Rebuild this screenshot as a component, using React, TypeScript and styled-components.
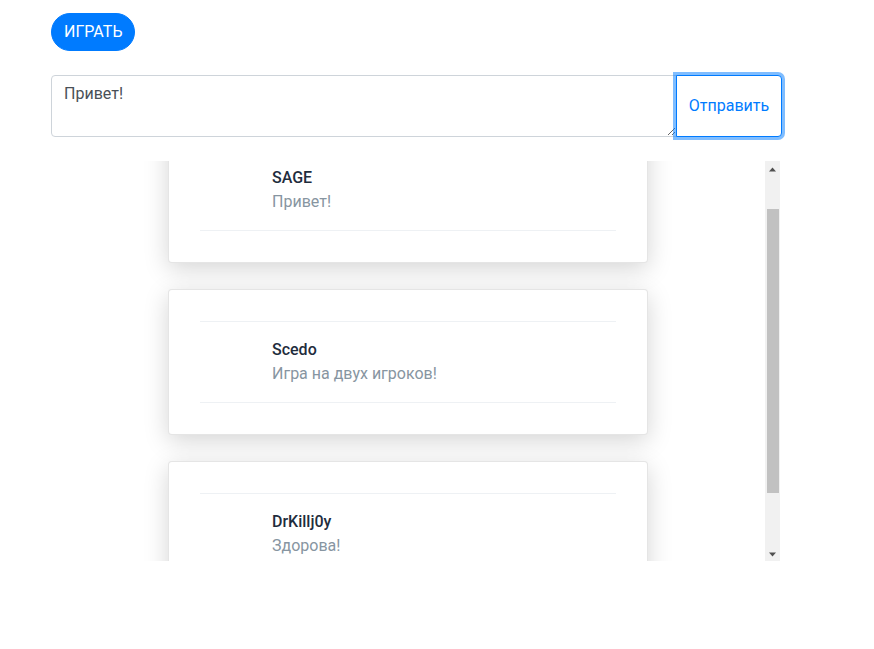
import React, { useEffect, useRef } from 'react';
import styled, { createGlobalStyle } from 'styled-components';

const GlobalStyle = createGlobalStyle`
  body {
    margin: 0;
    background: #fff;
    font-family: Roboto, "Liberation Sans", Arial, sans-serif;
    font-size: 16px;
    line-height: 1.5;
  }
  * { box-sizing: border-box; }
`;

const messages = [
  { author: 'SAGE', text: 'Привет!' },
  { author: 'Scedo', text: 'Игра на двух игроков!' },
  { author: 'DrKillj0y', text: 'Здорова!' },
];

const Arrow: React.FC<{ down?: boolean }> = ({ down }) => (
  <svg width="15" height="15" viewBox="0 0 15 15">
    <path d={down ? 'M4 6.5h7L7.5 10.5z' : 'M4 10.5h7L7.5 6.5z'} fill="#505050" />
  </svg>
);

const App: React.FC = () => {
  const listRef = useRef<HTMLDivElement>(null);

  useEffect(() => {
    if (listRef.current) listRef.current.scrollTop = 46;
  }, []);

  return (
    <>
      <GlobalStyle />
      <Page>
        <PlayButton>ИГРАТЬ</PlayButton>
        <InputGroup>
          <MessageInput defaultValue="Привет!" />
          <SendButton>Отправить</SendButton>
        </InputGroup>
        <ChatFrame>
          <ChatList ref={listRef}>
            {messages.map((m) => (
              <Card key={m.author}>
                <Divider />
                <Media>
                  <Avatar />
                  <Body>
                    <Author>{m.author}</Author>
                    <Text>{m.text}</Text>
                  </Body>
                </Media>
                <Divider />
              </Card>
            ))}
          </ChatList>
          <ScrollBar>
            <Arrow />
            <ScrollTrack>
              <ScrollThumb />
            </ScrollTrack>
            <Arrow down />
          </ScrollBar>
        </ChatFrame>
      </Page>
    </>
  );
};

export default App;

const Page = styled.div`
  display: flex;
  flex-direction: column;
  align-items: flex-start;
  padding: 13px 0 0 51px;
  width: 782px;
`;

const PlayButton = styled.button`
  background-color: #007bff;
  color: #fff;
  border: 1px solid #007bff;
  border-radius: 20px;
  padding: 6px 12px;
  font-family: inherit;
  font-size: 16px;
  line-height: 24px;
  cursor: pointer;
`;

const InputGroup = styled.div`
  display: flex;
  margin-top: 24px;
  width: 731px;
`;

const MessageInput = styled.textarea`
  flex: 1;
  height: 62px;
  padding: 6px 12px;
  border: 1px solid #ced4da;
  border-radius: 4px 0 0 4px;
  font-family: inherit;
  font-size: 16px;
  line-height: 24px;
  color: #495057;
  resize: vertical;
  outline: none;
`;

const SendButton = styled.button`
  width: 106px;
  height: 62px;
  margin-left: -1px;
  background: #fff;
  color: #007bff;
  border: 1px solid #007bff;
  border-radius: 0 4px 4px 0;
  box-shadow: 0 0 0 3px rgba(0, 123, 255, 0.5);
  font-family: inherit;
  font-size: 16px;
  line-height: 24px;
  cursor: pointer;
`;

const ChatFrame = styled.div`
  display: flex;
  margin-top: 24px;
  width: 729px;
  height: 400px;
`;

const ChatList = styled.div`
  flex: 1;
  overflow: hidden;
  display: flex;
  flex-direction: column;
  align-items: center;
  gap: 26px;
  padding: 2px 0 28px;
`;

const ScrollBar = styled.div`
  width: 15px;
  display: flex;
  flex-direction: column;
  background: #f1f1f1;
`;

const ScrollTrack = styled.div`
  flex: 1;
  padding: 33px 1px 0 2px;
`;

const ScrollThumb = styled.div`
  height: 284px;
  background: #c1c1c1;
`;

const Card = styled.div`
  flex-shrink: 0;
  width: 480px;
  padding: 31px;
  background: #fff;
  border: 1px solid rgba(0, 0, 0, 0.1);
  border-radius: 4px;
  box-shadow: 0 6px 24px rgba(0, 0, 0, 0.17);
`;

const Divider = styled.div`
  height: 1px;
  background: #eef1f4;
`;

const Media = styled.div`
  display: flex;
  padding: 16px 0;
`;

const Avatar = styled.div`
  width: 72px;
  flex-shrink: 0;
`;

const Body = styled.div`
  display: flex;
  flex-direction: column;
`;

const Author = styled.span`
  font-weight: 500;
  color: #1f2d3d;
`;

const Text = styled.span`
  color: #8795a1;
`;
